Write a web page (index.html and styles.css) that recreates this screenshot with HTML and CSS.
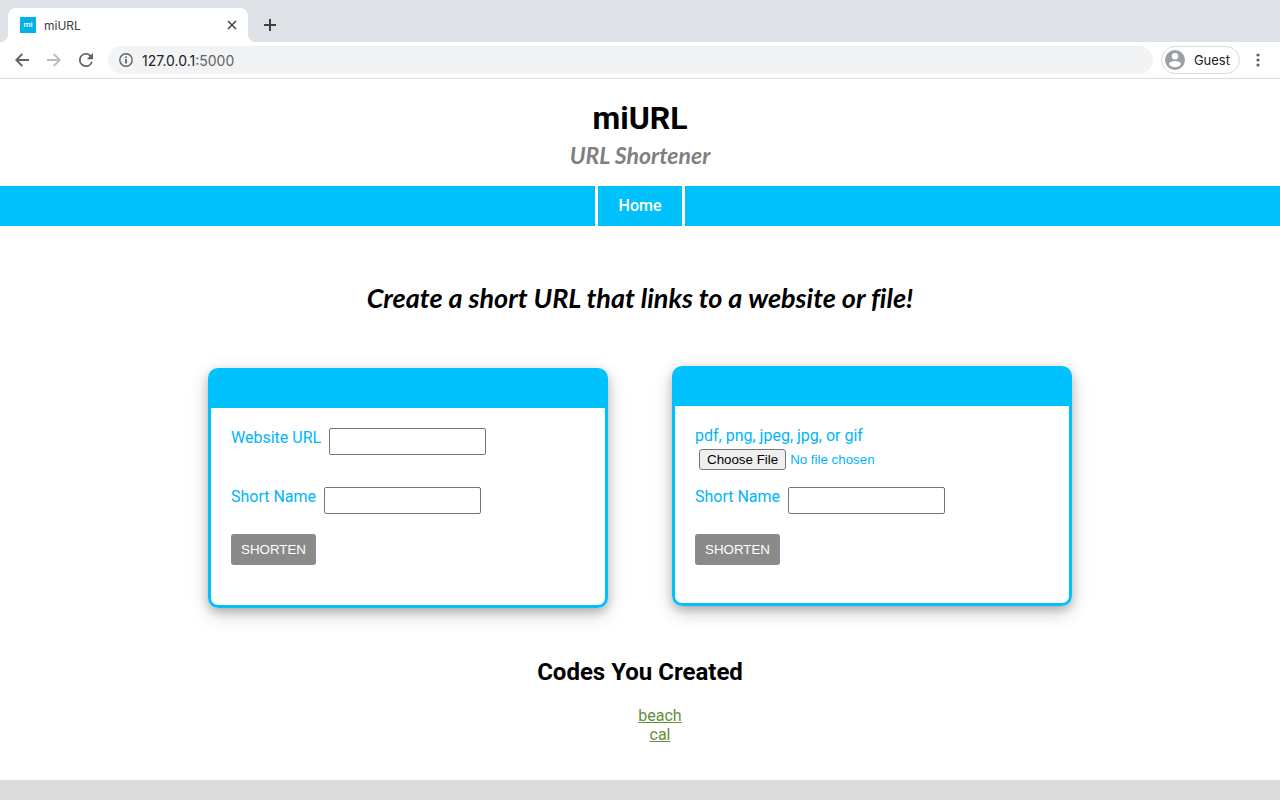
FILE: index.html
```html
<!DOCTYPE html>
<html lang="en">
<head>
<meta charset="utf-8">
<title>miURL</title>
<link rel="stylesheet" href="styles.css">
</head>
<body>
<div class="browser">
  <div class="tab-strip">
    <div class="tab">
      <span class="favicon">mi</span>
      <span class="tab-title">miURL</span>
      <button class="icon-button tab-close" aria-label="Close tab">
        <svg width="10" height="10" viewBox="0 0 10 10" fill="none" stroke="#45494d" stroke-width="1.6"><path d="M1 1l8 8M9 1L1 9"/></svg>
      </button>
    </div>
    <button class="icon-button tab-new" aria-label="New tab">
      <svg width="12" height="12" viewBox="0 0 12 12" fill="none" stroke="#3c4043" stroke-width="2"><path d="M6 0v12M0 6h12"/></svg>
    </button>
  </div>
  <div class="toolbar">
    <button class="icon-button" aria-label="Back">
      <svg width="14" height="14" viewBox="0 0 14 14" fill="none" stroke="#5f6368" stroke-width="1.9"><path d="M14 7H1.500M7.300.800L1.300 7l6 6.200"/></svg>
    </button>
    <button class="icon-button" aria-label="Forward">
      <svg width="14" height="14" viewBox="0 0 14 14" fill="none" stroke="#babcbe" stroke-width="1.9"><path d="M0 7h12.500M6.700.800l6 6.200-6 6.200"/></svg>
    </button>
    <button class="icon-button" aria-label="Reload">
      <svg width="14" height="14" viewBox="4 4 16 16" fill="#5f6368"><path d="M17.650 6.350A7.960 7.960 0 0 0 12 4a8 8 0 1 0 7.730 10h-2.080A6 6 0 1 1 12 6c1.660 0 3.140.690 4.220 1.780L13 11h7V4z"/></svg>
    </button>
    <div class="address">
      <svg width="14" height="14" viewBox="0 0 14 14" fill="none" stroke="#5f6368" stroke-width="1.400"><circle cx="7" cy="7" r="6.200"/><path d="M7 6v4.400M7 3.400v1.600" stroke-width="1.800"/></svg>
      <span>127.0.0.1<span class="port">:5000</span></span>
    </div>
    <button class="profile">
      <svg width="20" height="20" viewBox="2 2 20 20" fill="#9aa0a6"><path d="M12 2a10 10 0 1 0 0 20 10 10 0 0 0 0-20zm0 3a3.200 3.200 0 1 1 0 6.400A3.200 3.200 0 0 1 12 5zm0 14.200a7.200 7.200 0 0 1-6-3.220c.030-1.990 4-3.080 6-3.080s5.970 1.090 6 3.080a7.200 7.200 0 0 1-6 3.220z"/></svg>
      Guest
    </button>
    <button class="icon-button menu" aria-label="Menu">
      <svg width="4" height="14" viewBox="0 0 4 14" fill="#5f6368"><circle cx="2" cy="2" r="1.600"/><circle cx="2" cy="7" r="1.600"/><circle cx="2" cy="12" r="1.600"/></svg>
    </button>
  </div>
</div>

<div class="page">
  <header class="masthead">
    <h1 class="site-name">miURL</h1>
    <p class="tagline">URL Shortener</p>
  </header>
  <nav class="nav"><a class="nav-link" href="#">Home</a></nav>
  <main>
    <h2 class="intro">Create a short URL that links to a website or file!</h2>
    <div class="cards">
      <form class="card">
        <div class="card-header"></div>
        <div class="card-body">
          <div class="field field-url">
            <label for="url">Website URL</label>
            <input class="text-input" id="url" type="text">
          </div>
          <div class="field">
            <label for="url-name">Short Name</label>
            <input class="text-input" id="url-name" type="text">
          </div>
          <button class="submit" type="button">SHORTEN</button>
        </div>
      </form>
      <form class="card">
        <div class="card-header"></div>
        <div class="card-body">
          <div class="field field-file">
            <label for="file">pdf, png, jpeg, jpg, or gif</label>
            <input class="file-input" id="file" type="file">
          </div>
          <div class="field">
            <label for="file-name">Short Name</label>
            <input class="text-input" id="file-name" type="text">
          </div>
          <button class="submit" type="button">SHORTEN</button>
        </div>
      </form>
    </div>
    <section class="codes">
      <h2 class="codes-title">Codes You Created</h2>
      <ul class="code-list">
        <li><a href="#">beach</a></li>
        <li><a href="#">cal</a></li>
      </ul>
    </section>
  </main>
</div>
<footer class="footer"></footer>
</body>
</html>
```
FILE: styles.css
```css
* { box-sizing: border-box; }

body {
  margin: 0;
  min-height: 100vh;
  display: flex;
  flex-direction: column;
  background: #fff;
  color: #000;
  font: 16px/19px Roboto, sans-serif;
}

h1, h2, p, ul { margin: 0; padding: 0; }

/* Browser bar */
.browser {
  border-bottom: 1px solid #dadce0;
  font-family: Inter, sans-serif;
}

.tab-strip {
  display: flex;
  height: 42px;
  padding: 8px 8px 0;
  background: #dee1e6;
}

.tab {
  display: flex;
  align-items: center;
  width: 240px;
  padding: 0 11px 0 12px;
  background: #fff;
  border-radius: 8px 8px 0 0;
  position: relative;
}

.tab::before,
.tab::after {
  content: "";
  position: absolute;
  bottom: 0;
  width: 8px;
  height: 8px;
}
.tab::before { left: -8px; background: radial-gradient(circle at 0 0, #dee1e6 8px, #fff 8px); }
.tab::after { right: -8px; background: radial-gradient(circle at 100% 0, #dee1e6 8px, #fff 8px); }

.favicon {
  width: 16px;
  height: 16px;
  background: #00b1ea;
  color: #fff;
  font: 500 8px/16px Roboto, sans-serif;
  text-align: center;
}

.tab-title {
  flex: 1;
  margin-left: 8px;
  color: #3c4043;
  font-size: 12px;
}

.icon-button {
  display: flex;
  align-items: center;
  justify-content: center;
  width: 28px;
  height: 28px;
  padding: 0;
  border: 0;
  background: none;
}
.tab-close { width: 10px; }
.tab-new { margin: 3px 0 0 8px; }

.toolbar {
  display: flex;
  align-items: center;
  gap: 4px;
  height: 36px;
  padding: 0 8px;
}

.address {
  flex: 1;
  display: flex;
  align-items: center;
  gap: 9px;
  height: 28px;
  margin: 0 4px;
  padding: 0 11px;
  border-radius: 14px;
  background: #f1f3f4;
  color: #202124;
  font-size: 14px;
}
.port { color: #5f6368; }

.profile {
  display: flex;
  align-items: center;
  gap: 9px;
  height: 28px;
  padding: 0 9px 0 3px;
  border: 1px solid #dadce0;
  border-radius: 14px;
  background: #fff;
  color: #202124;
  font: 13px/19px Inter, sans-serif;
}

/* Page */
.page { flex: 1; }

.masthead {
  padding: 20px 0 17px;
  text-align: center;
}
.site-name { font-size: 32px; line-height: 38px; }
.tagline {
  margin-top: 5px;
  color: #808080;
  font: italic bold 23px/27px Lato, sans-serif;
}

.nav {
  display: flex;
  justify-content: center;
  background: #00c1fc;
}
.nav-link {
  min-width: 90px;
  border: solid #fff;
  border-width: 0 3px;
  color: #fff;
  font-weight: 500;
  line-height: 40px;
  text-align: center;
  text-decoration: none;
}

.intro {
  padding: 56px 0 52px;
  font: italic bold 27px/32px Lato, sans-serif;
  font-variant-ligatures: none;
  text-align: center;
}

.cards {
  display: flex;
  flex-wrap: wrap;
  justify-content: center;
  align-items: last baseline;
  gap: 64px;
}

.card {
  width: 400px;
  max-width: 100%;
  min-height: 240px;
  border: 3px solid #00c1fc;
  border-radius: 10px;
  box-shadow: 0 4px 8px rgba(0, 0, 0, 0.2), 0 6px 20px rgba(0, 0, 0, 0.19);
}
.card-header {
  height: 37px;
  border-radius: 6px 6px 0 0;
  background: #00c1fc;
}
.card-body {
  padding: 20px;
  color: #00b4fa;
}

.field {
  display: flex;
  align-items: flex-start;
  margin-bottom: 20px;
}
.field-url { margin-bottom: 32px; }
.field-file {
  flex-direction: column;
  gap: 4px;
  margin-bottom: 17px;
}

.text-input {
  width: 157px;
  height: 27px;
  margin-left: 8px;
  padding: 0 5px;
  border: 1px solid #767676;
  border-radius: 2px;
  background: #fff;
}

.file-input {
  height: 21px;
  margin-left: 4px;
  color: #00b4fa;
  font-family: "Liberation Sans", sans-serif;
}
.file-input::file-selector-button {
  height: 21px;
  padding: 0 7px;
  border: 1px solid #767676;
  border-radius: 3px;
  margin-right: 4px;
  background: #efefef;
  color: #000;
  font-family: "Liberation Sans", sans-serif;
}

.submit {
  height: 31px;
  padding: 0 10px;
  border: 0;
  border-radius: 3px;
  background: #8a8a8a;
  color: #fff;
  font-family: "Liberation Sans", sans-serif;
}

.codes {
  padding: 50px 0 36px;
  text-align: center;
}
.codes-title { font-size: 24px; line-height: 28px; }
.code-list {
  margin-top: 20px;
  padding-left: 40px;
  list-style: none;
}
.code-list a { color: #63903a; }

.footer {
  min-height: 20px;
  background: #dcdcdc;
}
```
